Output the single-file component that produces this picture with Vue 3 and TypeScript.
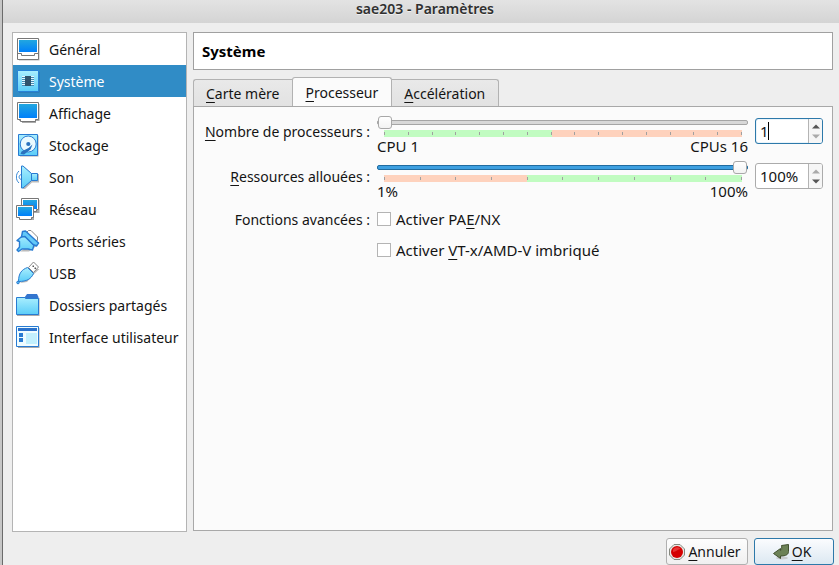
<script setup lang="ts">
import { ref } from 'vue'

interface Section { id: string; label: string }

const sections: Section[] = [
  { id: 'general', label: 'Général' },
  { id: 'system', label: 'Système' },
  { id: 'display', label: 'Affichage' },
  { id: 'storage', label: 'Stockage' },
  { id: 'audio', label: 'Son' },
  { id: 'network', label: 'Réseau' },
  { id: 'serial', label: 'Ports séries' },
  { id: 'usb', label: 'USB' },
  { id: 'shared', label: 'Dossiers partagés' },
  { id: 'ui', label: 'Interface utilisateur' },
]

const tabs = [
  { key: 'C', rest: 'arte mère' },
  { key: 'P', rest: 'rocesseur' },
  { key: 'A', rest: 'ccélération' },
]

const current = ref('system')
const activeTab = ref(1)
const cpus = ref(1)
const cap = ref(100)
const pae = ref(false)
const nested = ref(false)

function stepCpus(delta: number) {
  cpus.value = Math.min(16, Math.max(1, Number(cpus.value) + delta))
}
function stepCap(delta: number) {
  cap.value = Math.min(100, Math.max(1, Number(cap.value) + delta))
}
function setCap(event: Event) {
  const n = parseInt((event.target as HTMLInputElement).value, 10)
  if (!Number.isNaN(n)) cap.value = Math.min(100, Math.max(1, n))
}
</script>

<template>
  <div class="desktop">
    <div class="window">
      <header class="titlebar"><h1>sae203 - Paramètres</h1></header>

      <div class="body">
        <nav class="sections" aria-label="Catégories">
          <button
            v-for="s in sections"
            :key="s.id"
            type="button"
            class="section"
            :class="{ selected: s.id === current }"
            @click="current = s.id"
          >
            <svg class="icon" viewBox="0 0 24 24" aria-hidden="true">
              <defs>
                <linearGradient :id="'screen-' + s.id" x1="0" y1="0" x2="0" y2="1">
                  <stop offset="0" stop-color="#22a7e0" /><stop offset="1" stop-color="#0080fa" />
                </linearGradient>
                <linearGradient :id="'pale-' + s.id" x1="0" y1="0" x2="0" y2="1">
                  <stop offset="0" stop-color="#a9eefe" /><stop offset="1" stop-color="#5bcdf8" />
                </linearGradient>
              </defs>
              <g v-if="s.id === 'general'">
                <path d="M3 2.5H23.5V23.5H3z" fill="#bbb" />
                <path d="M1.5 1.5H22.5V22.5H1.5z" fill="#fff" stroke="#777" />
                <path d="M3 3H21V15H3z" :fill="`url(#screen-${s.id})`" />
                <path d="M2 16.5H5.5V18.5H18.5V16.5H22" fill="none" stroke="#777" />
              </g>
              <g v-else-if="s.id === 'system'">
                <path d="M3 3H23.5V23.5H3z" fill="#2570ae" />
                <path d="M1.5 1.5H22.5V22.5H1.5z" :fill="`url(#pale-${s.id})`" stroke="#2783d8" />
                <path d="M6 7.5H18M6 9.5H18M6 11.5H18M6 13.5H18M6 15.5H18" stroke="#e3f7ff" />
                <path d="M6 8.5H18M6 10.5H18M6 12.5H18M6 14.5H18M6 16.5H18" stroke="#448cb5" />
                <path d="M9 7H15V17H9z" fill="#30536c" />
              </g>
              <g v-else-if="s.id === 'display'">
                <path d="M3 3H23.5V20H20V22H6V20H3z" fill="#aaa" />
                <path d="M1.5 1.5H22.5V18.5H19.5V20.5H4.5V18.5H1.5z" fill="#fff" stroke="#777" />
                <path d="M3 3H21V17H3z" :fill="`url(#screen-${s.id})`" />
              </g>
              <g v-else-if="s.id === 'storage'">
                <path d="M4 2.5H22.5V23.5H4z" fill="#aaa" />
                <path d="M2.5 1.5H21.5V22.5H2.5z" :fill="`url(#pale-${s.id})`" stroke="#287bd2" />
                <circle cx="12.2" cy="11" r="8" fill="#eafaff" stroke="#287bd2" />
                <circle cx="12.3" cy="11" r="2.1" fill="#2a72be" />
                <path d="M12.5 15L16.5 11.5L14.5 16.5L8 21.5L4.5 21L5.5 18.5z" fill="#2a72be" />
              </g>
              <g v-else-if="s.id === 'audio'">
                <path d="M7 2.5H9L16 9H23V17.5H16L9 24H7z" fill="#bbb" />
                <path d="M5.5 1H7L15.5 8.5V15.5L7 23H5.5z" :fill="`url(#pale-${s.id})`" stroke="#287bd2" stroke-linejoin="round" />
                <path d="M15.5 8.5H21.5V15.5H15.5z" :fill="`url(#pale-${s.id})`" stroke="#287bd2" />
                <path d="M3 6C-.5 9 -.5 15 3 18M5 9.5C2.5 10.5 2.5 13.5 5 14.5" fill="none" stroke="#3688d6" />
              </g>
              <g v-else-if="s.id === 'network'">
                <path d="M7 3H23.5V16H18V23H4V20H2V10H7z" fill="#aaa" />
                <path d="M5.5 1.5H22.5V12.5H20.5V14.5H7.5V12.5H5.5z" fill="#fff" stroke="#777" />
                <path d="M7 3H21V12H7z" :fill="`url(#screen-${s.id})`" />
                <path d="M.5 8.5H17.5V20.5H15.5V22.5H3.5V20.5H.5z" fill="#fff" stroke="#777" />
                <path d="M2 10H16V19H2z" :fill="`url(#screen-${s.id})`" />
              </g>
              <g v-else-if="s.id === 'serial'">
                <path d="M4 22.5H13L18 19L23.5 14L20 13z" fill="#bbb" />
                <path d="M10.500 3.500L12.500 1.500L15 1.500L21.500 8V11.500L19.500 13z" fill="#fff" stroke="#888" />
                <path d="M1 11.500L7.500 6L18 16L16.500 21L14 20.500L12 20H6L2.500 22.500L1 21L3.500 18V12.500z" :fill="`url(#pale-${s.id})`" stroke="#287bd2" stroke-width="1.400" stroke-linejoin="round" />
                <path d="M6.500 2.500L9.500 2L22.500 14L20.500 17L17 15.500L9 7.500L5.500 8z" fill="#62c8f8" stroke="#287bd2" stroke-width="1.400" stroke-linejoin="round" />
              </g>
              <g v-else-if="s.id === 'usb'">
                <path d="M4 22L11 21L18 13L23.5 8L20 8z" fill="#bbb" />
                <path d="M12.5 6.5L17.5 1L22.5 6L17.5 11.5z" fill="#fff" stroke="#888" />
                <path d="M16.5 4.5H18V6H16.5zM18.5 6.5H20V8H18.5z" fill="#555" />
                <path d="M2.5 20.5C2.5 12 6 8.5 11.5 6.5L17.5 12.5C15 18 11 20.5 2.5 20.5z" :fill="`url(#pale-${s.id})`" stroke="#287bd2" />
                <circle cx="2" cy="21.5" r="1.3" fill="#5bbdf1" stroke="#287bd2" />
              </g>
              <g v-else-if="s.id === 'shared'">
                <path d="M1 5H23.5V23H1z" fill="#aaa" />
                <path d="M8.5 4.5L11 1H21L22.5 4V8H8.5z" fill="#3475ce" />
                <path d="M.5 4.5H9.5V5.5H22.5V21.5H.5z" :fill="`url(#pale-${s.id})`" stroke="#287bd2" />
              </g>
              <g v-else>
                <path d="M2 3H23.5V23H2z" fill="#aaa" />
                <path d="M.5 1.5H22.5V21.5H.5z" fill="#effcff" stroke="#287bd2" />
                <path d="M2 3H21V6H2z" fill="#2a72cc" />
                <path d="M3 8H7V12H3zM3 13H7V17H3z" fill="#287bd2" />
                <path d="M10 8H21V19H10z" fill="#c2f0fd" />
              </g>
            </svg>
            <span class="section-label">{{ s.label }}</span>
          </button>
        </nav>

        <main class="content">
          <h2 class="heading">Système</h2>

          <div class="tabs" role="tablist">
            <button
              v-for="(t, i) in tabs"
              :key="t.key"
              type="button"
              role="tab"
              class="tab"
              :class="{ active: i === activeTab }"
              :aria-selected="i === activeTab"
              @click="activeTab = i"
            ><u>{{ t.key }}</u>{{ t.rest }}</button>
          </div>

          <section class="pane" role="tabpanel">
            <div class="form">
              <label class="caption" for="cpus"><u>N</u>ombre de processeurs :</label>
              <div class="slider">
                <input v-model.number="cpus" type="range" min="1" max="16" class="range" aria-label="Nombre de processeurs" />
                <div class="scale cpu-scale"><i v-for="n in 16" :key="n" class="tick"></i></div>
                <div class="bounds"><span>CPU 1</span><span>CPUs 16</span></div>
              </div>
              <div class="spin focused">
                <div class="field">
                  <input id="cpus" v-model.number="cpus" type="text" />
                  <span class="caret"></span>
                </div>
                <div class="steps">
                  <button type="button" aria-label="Plus" :disabled="cpus >= 16" @click="stepCpus(1)"><svg viewBox="0 0 8 5"><path d="M0 4.5L4 .5L8 4.5z" /></svg></button>
                  <button type="button" aria-label="Moins" :disabled="cpus <= 1" @click="stepCpus(-1)"><svg viewBox="0 0 8 5"><path d="M0 .5L4 4.5L8 .5z" /></svg></button>
                </div>
              </div>

              <label class="caption" for="cap"><u>R</u>essources allouées :</label>
              <div class="slider">
                <input v-model.number="cap" type="range" min="1" max="100" class="range filled" aria-label="Ressources allouées" />
                <div class="scale cap-scale"><i v-for="n in 11" :key="n" class="tick"></i></div>
                <div class="bounds"><span>1%</span><span>100%</span></div>
              </div>
              <div class="spin">
                <div class="field">
                  <input id="cap" :value="cap + '%'" type="text" @change="setCap" />
                </div>
                <div class="steps">
                  <button type="button" aria-label="Plus" :disabled="cap >= 100" @click="stepCap(1)"><svg viewBox="0 0 8 5"><path d="M0 4.5L4 .5L8 4.5z" /></svg></button>
                  <button type="button" aria-label="Moins" :disabled="cap <= 1" @click="stepCap(-1)"><svg viewBox="0 0 8 5"><path d="M0 .5L4 4.5L8 .5z" /></svg></button>
                </div>
              </div>

              <span class="caption plain">Fonctions avancées :</span>
              <div class="checks">
                <label class="check"><input v-model="pae" type="checkbox" /><span>Activer PA<u>E</u>/NX</span></label>
                <label class="check"><input v-model="nested" type="checkbox" /><span>Activer <u>V</u>T-x/AMD-V imbriqué</span></label>
              </div>
            </div>
          </section>
        </main>
      </div>

      <footer class="actions">
        <button type="button" class="action">
          <svg class="action-icon" viewBox="0 0 16 16" aria-hidden="true">
            <path d="M5 .5H11L15.5 5V11L11 15.5H5L.5 11V5z" fill="#e8e8e3" stroke="#85887f" />
            <circle cx="8" cy="8" r="6" fill="#d40000" />
            <path d="M4 6C5 2.500 10 2.500 11.500 5C9 5 7 8 4 8z" fill="#f04a4a" opacity=".7" />
          </svg>
          <span><u>A</u>nnuler</span>
        </button>
        <button type="submit" class="action primary">
          <svg class="action-icon" viewBox="0 0 16 16" aria-hidden="true">
            <ellipse cx="9" cy="14" rx="6" ry="1.500" fill="#c9ccd0" />
            <path d="M8.500 1.500L15.500 .5V7.500C15.500 10.500 13 12 7.500 12V14.500L.5 9.500L7.500 4.500V6.500C8.500 6.500 9 5.500 8.500 1.500z" fill="#6c8257" stroke="#41502f" />
          </svg>
          <span><u>O</u>K</span>
        </button>
      </footer>
    </div>
  </div>
</template>

<style>
html, body, #app { height: 100%; }
body { margin: 0; overflow: hidden; }
</style>

<style scoped>
* { box-sizing: border-box; }
.desktop {
  height: 100%;
  padding-left: 2px;
  background: #c6c6c6;
  font: 14px/20px "Noto Sans", sans-serif;
  color: #141414;
}
button, input { font: inherit; color: inherit; }
u { text-decoration: underline; text-decoration-thickness: 1px; text-underline-offset: 3px; text-decoration-skip-ink: none; }
.window {
  height: 100%;
  display: flex;
  flex-direction: column;
  border-left: 1px solid #6b6b6b;
  background: #eee;
}
.titlebar {
  height: 23px;
  display: flex;
  justify-content: center;
  padding-left: 8px;
  background: linear-gradient(#e3e3e3, #d4d4d4);
}
h1 { margin: 0; font-size: 14px; line-height: 18px; font-weight: 600; color: #303030; text-shadow: 0 1px #f0f0f0; }
.body {
  flex: 1;
  min-height: 0;
  display: flex;
  gap: 6px;
  padding: 9px 6px 6px 9px;
}
.sections {
  width: 175px;
  flex: none;
  border: 1px solid #b4b4b4;
  background: #fff;
}
.section {
  display: flex;
  align-items: center;
  gap: 9px;
  width: 100%;
  height: 32px;
  padding: 0 3px;
  border: 0;
  background: none;
  text-align: left;
  white-space: nowrap;
}
.section-label { padding-top: 2px; }
.section.selected { background: #308cc6; color: #fff; }
.icon { width: 24px; height: 24px; flex: none; }
.content { flex: 1; min-width: 0; display: flex; flex-direction: column; padding-bottom: 1px; }
.heading {
  margin: 0 0 9px;
  padding: 8px;
  border: 1px solid #a0a0a0;
  background: #fff;
  font-size: 15px;
  line-height: 20px;
  font-weight: 700;
  color: #000;
}
.tabs { display: flex; align-items: flex-end; height: 30px; margin-top: -2px; margin-bottom: -1px; }
.tab {
  height: 28px;
  padding: 2px 13px 0 12px;
  border: 1px solid #b2b2b2;
  border-left-width: 0;
  border-bottom-color: #aaa;
  background: linear-gradient(#e9e9e9, #e2e2e2);
  border-radius: 0 3px 0 0;
}
.tab:first-child { border-left-width: 1px; border-radius: 3px 0 0; border-right-width: 0; }
.tab.active {
  height: 30px;
  border-left-width: 1px;
  border-bottom-color: #fbfbfb;
  border-radius: 3px 3px 0 0;
  background: #fbfbfb;
}
.pane { flex: 1; border: 1px solid #a8a8a8; background: #fbfbfb; padding: 10px 9px; }
.form {
  display: grid;
  grid-template-columns: minmax(166px, auto) 1fr 68px;
  column-gap: 7px;
  row-gap: 7px;
  padding-left: 1px;
}
.caption { text-align: right; padding-top: 5px; white-space: nowrap; }
.caption.plain { padding-top: 3px; }
.slider { display: flex; flex-direction: column; height: 38px; }
.range { appearance: none; width: 100%; height: 12px; margin: 0; background: none; display: block; }
.range::-webkit-slider-runnable-track {
  height: 5px;
  border: 1px solid #a5a5a5;
  border-radius: 2px;
  background: #d8d8d8;
}
.range.filled::-webkit-slider-runnable-track { border-color: #206b9f; background: #3d9fe0; }
.range::-webkit-slider-thumb {
  appearance: none;
  width: 14px;
  height: 13px;
  margin-top: -5px;
  border: 1px solid #a8a8a8;
  border-radius: 3px;
  background: linear-gradient(#fff, #f3f3f3);
}
.scale { display: flex; justify-content: space-between; align-items: center; height: 7px; margin: 2px 6px 0 7px; }
.cpu-scale { background: linear-gradient(90deg, #c1fcc1 47%, #fed2bd 47%); }
.cap-scale { background: linear-gradient(90deg, #fed2bd 40%, #c1fcc1 40%); }
.tick { width: 1px; height: 3px; background: #a0a0a0; }
.bounds { display: flex; justify-content: space-between; font-size: 15px; line-height: 18px; }
.spin {
  display: flex;
  height: 26px;
  margin-top: 1px;
  border: 1px solid #ababab;
  border-radius: 3px;
  background: #fff;
  overflow: hidden;
  font-size: 15px;
}
.spin.focused { border-color: #2d79aa; box-shadow: inset 0 0 1px #308cc6; }
.field { flex: 1; min-width: 0; position: relative; }
.field input { width: 100%; height: 100%; padding: 0 0 0 4px; border: 0; outline: 0; background: none; }
.caret { position: absolute; left: 12px; top: 3px; width: 1px; height: 18px; background: #000; }
.steps { width: 14px; display: flex; flex-direction: column; border-left: 1px solid #b4b4b4; background: #f6f6f6; padding: 2px 0; }
.steps button { flex: 1; display: flex; align-items: center; justify-content: center; padding: 0; border: 0; background: none; }
.steps svg { width: 8px; height: 5px; fill: #555; }
.steps button:disabled svg { fill: #aaa; }
.checks { grid-column: 2 / 4; display: flex; flex-direction: column; gap: 5px; margin-top: -1px; font-size: 15px; }
.check { display: flex; align-items: center; gap: 5px; height: 26px; }
.check input { appearance: none; width: 14px; height: 14px; margin: 0; border: 1px solid #b4b4b4; background: #fff; }
.check input:checked { background: #308cc6; }
.actions { display: flex; justify-content: flex-end; gap: 6px; height: 27px; padding-right: 5px; }
.action {
  display: flex;
  align-items: center;
  justify-content: center;
  gap: 3px;
  width: 82px;
  height: 27px;
  padding: 0 4px 0 0;
  border: 1px solid #b0b0b0;
  border-radius: 3px;
  background: linear-gradient(#fdfdfd, #f0f0f0);
}
.action.primary { width: 80px; border-color: #2d79aa; background: linear-gradient(#fbfcfe, #dce8f2); }
.action-icon { width: 16px; height: 16px; flex: none; }
</style>
